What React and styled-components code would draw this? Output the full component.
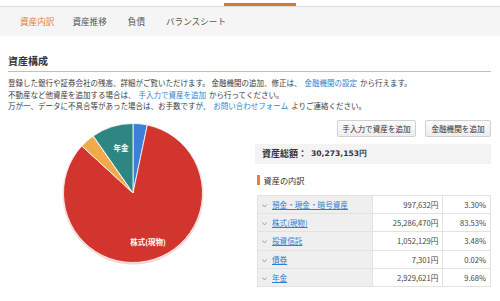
import React from "react";
import styled, { createGlobalStyle } from "styled-components";

const Global = createGlobalStyle`
  html, body { margin: 0; padding: 0; background: #fff; }
  body {
    font-family: "Noto Sans CJK JP", "Noto Sans", sans-serif;
    color: #333;
    width: 500px;
    overflow: hidden;
  }
  * { box-sizing: border-box; }
`;

const TopStrip = styled.div`
  height: 6px;
  display: flex;
  align-items: flex-end;
`;
const Indicator = styled.div`
  margin-left: 224px;
  width: 72px;
  height: 3px;
  background: #d9782f;
`;
const TabBar = styled.nav`
  height: 30px;
  border-top: 1px solid #dcdcdc;
  background: #f5f5f5;
  display: flex;
  align-items: center;
  padding-left: 20px;
  padding-bottom: 2px;
`;
const Tab = styled.div`
  font-size: 8.6px;
  line-height: 12px;
  color: ${(p) => (p.$active ? "#e2813f" : "#555")};
  margin-right: ${(p) => p.$gap}px;
`;

const Content = styled.main`
  padding: 0 9px 0 8px;
`;
const Heading = styled.h2`
  margin: 0;
  padding-top: 19px;
  padding-bottom: 4px;
  font-size: 10px;
  line-height: 12px;
  font-weight: bold;
  color: #333;
  border-bottom: 1px solid #f0b37e;
`;
const Intro = styled.div`
  margin-top: 5px;
  font-size: 7.5px;
  line-height: 11.5px;
  color: #3a3a3a;
`;
const Link = styled.a`
  color: #2f7fd0;
  text-decoration: none;
  margin: 0 3px;
`;
const Columns = styled.div`
  display: flex;
  margin-top: 8px;
`;
const PieCol = styled.div`
  width: 247px;
  flex: none;
`;
const RightCol = styled.div`
  flex: 1;
`;
const ButtonRow = styled.div`
  display: flex;
  justify-content: flex-end;
  gap: 9px;
`;
const Button = styled.button`
  width: ${(p) => p.$w}px;
  height: 17px;
  padding: 0;
  font-family: inherit;
  font-size: 7.6px;
  color: #333;
  background: linear-gradient(#fbfbfb, #ededed);
  border: 1px solid #d0d0d0;
  border-radius: 2px;
`;
const TotalBox = styled.div`
  margin-top: 7px;
  height: 20px;
  background: #f3f3f3;
  display: flex;
  align-items: center;
  padding-left: 7px;
  font-size: 9px;
  font-weight: bold;
  color: #333;
`;
const Amount = styled.span`
  font-family: "DejaVu Sans", sans-serif;
  font-size: 7.6px;
  margin-left: 4px;
`;
const SubHeading = styled.div`
  margin-top: 10px;
  margin-left: 2px;
  display: flex;
  align-items: center;
  gap: 4px;
  font-size: 8.2px;
  line-height: 12px;
  color: #333;
  &::before {
    content: "";
    width: 2.5px;
    height: 10px;
    background: #e2813f;
  }
`;
const Table = styled.table`
  margin-top: 9px;
  margin-left: 2px;
  width: 234px;
  border-collapse: collapse;
  font-size: 7.6px;
`;
const Row = styled.tr`
  height: 18.4px;
`;
const NameCell = styled.td`
  width: 115px;
  background: #efefef;
  border: 1px solid #e2e2e2;
  padding: 0 0 0 4px;
  white-space: nowrap;
`;
const NumCell = styled.td`
  width: ${(p) => p.$w}px;
  text-align: right;
  border: 1px solid #e2e2e2;
  padding: 0 4px 0 0;
  color: #444;
  white-space: nowrap;
`;
const Chevron = styled.svg`
  width: 5px;
  height: 4px;
  margin-right: 5px;
  vertical-align: middle;
`;
const TableLink = styled.a`
  color: #2f7fd0;
  text-decoration: underline;
`;

const data = [
  { name: "預金・現金・暗号資産", value: "997,632円", pct: 3.3, color: "#3d7fd9" },
  { name: "株式(現物)", value: "25,286,470円", pct: 83.53, color: "#d2352d" },
  { name: "投資信託", value: "1,052,129円", pct: 3.48, color: "#f0aa4c" },
  { name: "債券", value: "7,301円", pct: 0.02, color: "#8e5ac8" },
  { name: "年金", value: "2,929,621円", pct: 9.68, color: "#2d8682" },
];

function Pie() {
  const cx = 125;
  const cy = 73;
  const r = 69.5;
  let acc = 0;
  const total = data.reduce((s, d) => s + d.pct, 0);
  const slices = data.map((d) => {
    const a0 = (acc / total) * Math.PI * 2 - Math.PI / 2;
    acc += d.pct;
    const a1 = (acc / total) * Math.PI * 2 - Math.PI / 2;
    const large = a1 - a0 > Math.PI ? 1 : 0;
    const x0 = cx + r * Math.cos(a0);
    const y0 = cy + r * Math.sin(a0);
    const x1 = cx + r * Math.cos(a1);
    const y1 = cy + r * Math.sin(a1);
    return (
      <path
        key={d.name}
        d={`M${cx},${cy} L${x0},${y0} A${r},${r} 0 ${large} 1 ${x1},${y1} Z`}
        fill={d.color}
        stroke="#fff"
        strokeWidth="0.8"
        strokeLinejoin="round"
      />
    );
  });
  return (
    <svg width="247" height="150" viewBox="0 0 247 150">
      <circle cx={cx} cy={cy + 1} r={r + 1} fill="#f3d6d4" />
      {slices}
      <text x="113" y="31" fill="#fff" fontSize="7.5" fontWeight="bold" textAnchor="middle"
        fontFamily='"Noto Sans CJK JP", sans-serif'>年金</text>
      <text x="140" y="125" fill="#fff" fontSize="7.5" fontWeight="bold" textAnchor="middle"
        fontFamily='"Noto Sans CJK JP", sans-serif'>株式(現物)</text>
    </svg>
  );
}

export default function App() {
  return (
    <>
      <Global />
      <TopStrip>
        <Indicator />
      </TopStrip>
      <TabBar>
        <Tab $active $gap={18}>資産内訳</Tab>
        <Tab $gap={21}>資産推移</Tab>
        <Tab $gap={21}>負債</Tab>
        <Tab $gap={0}>バランスシート</Tab>
      </TabBar>
      <Content>
        <Heading>資産構成</Heading>
        <Intro>
          <div>
            登録した銀行や証券会社の残高、詳細がご覧いただけます。 金融機関の追加、修正は、
            <Link>金融機関の設定</Link>から行えます。
          </div>
          <div>
            不動産など他資産を追加する場合は、<Link>手入力で資産を追加</Link>から行ってください。
          </div>
          <div>
            万が一、データに不具合等があった場合は、お手数ですが、<Link>お問い合わせフォーム</Link>よりご連絡ください。
          </div>
        </Intro>
        <Columns>
          <PieCol>
            <Pie />
          </PieCol>
          <RightCol>
            <ButtonRow>
              <Button $w={79}>手入力で資産を追加</Button>
              <Button $w={66}>金融機関を追加</Button>
            </ButtonRow>
            <TotalBox>
              資産総額：<Amount>30,273,153円</Amount>
            </TotalBox>
            <SubHeading>資産の内訳</SubHeading>
            <Table>
              <tbody>
                {data.map((d) => (
                  <Row key={d.name}>
                    <NameCell>
                      <Chevron viewBox="0 0 5 4">
                        <polyline points="0.5,0.5 2.5,3 4.5,0.5" fill="none" stroke="#999" strokeWidth="0.9" />
                      </Chevron>
                      <TableLink>{d.name}</TableLink>
                    </NameCell>
                    <NumCell $w={71}>{d.value}</NumCell>
                    <NumCell $w={48}>{d.pct.toFixed(2)}%</NumCell>
                  </Row>
                ))}
              </tbody>
            </Table>
          </RightCol>
        </Columns>
      </Content>
    </>
  );
}
